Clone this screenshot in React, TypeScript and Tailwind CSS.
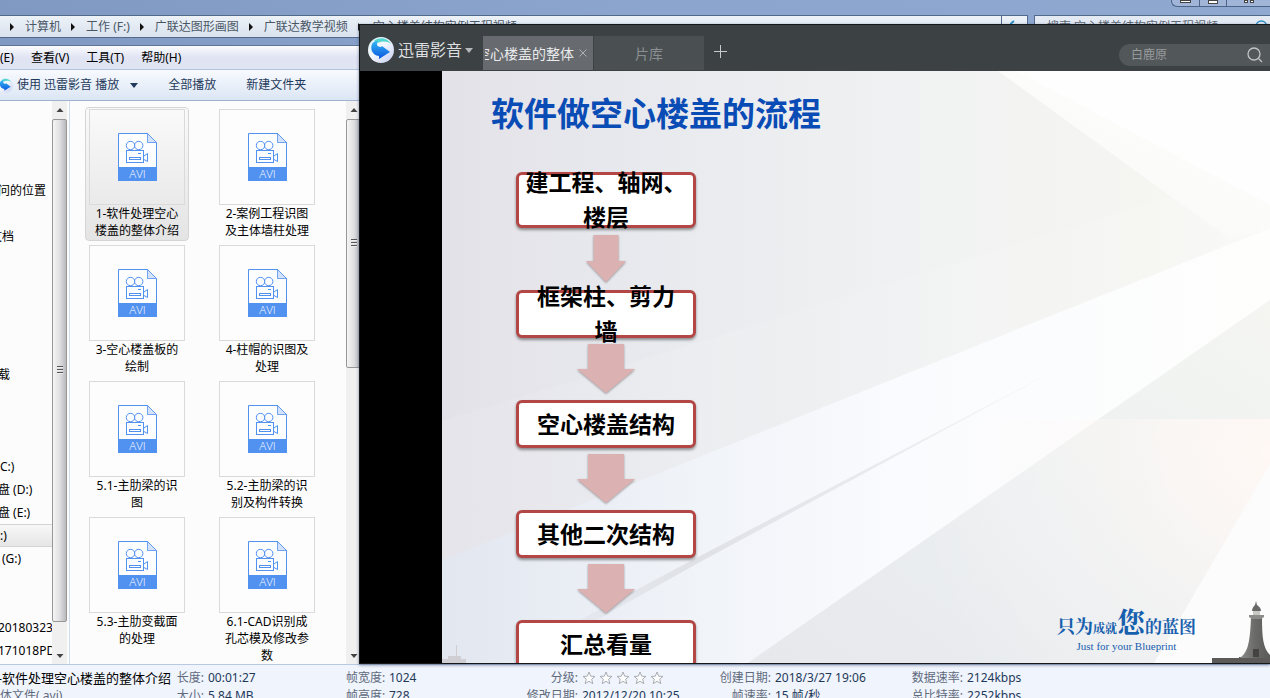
import React from 'react';

import { Search } from 'lucide-react';

const crumbs = ['计算机', '工作 (F:)', '广联达图形画图', '广联达教学视频', '空心楼盖结构实例工程视频'];

const menus = ['(E)', '查看(V)', '工具(T)', '帮助(H)'];

const files = [
  '1-软件处理空心楼盖的整体介绍',
  '2-案例工程识图及主体墙柱处理',
  '3-空心楼盖板的绘制',
  '4-柱帽的识图及处理',
  '5.1-主肋梁的识图',
  '5.2-主肋梁的识别及构件转换',
  '5.3-主肋变截面的处理',
  '6.1-CAD识别成孔芯模及修改参数',
];

// row index in the folder tree -> label; the tree is scrolled to the right
const treeRows: Record<number, { text: string; shift?: string; selected?: boolean }> = {
  3: { text: '问的位置', shift: '-ml-0.5' },
  5: { text: '文档', shift: '-ml-2.5' },
  11: { text: '载', shift: '-ml-0.5' },
  15: { text: 'C:)' },
  16: { text: '盘 (D:)', shift: '-ml-0.5' },
  17: { text: '盘 (E:)', shift: '-ml-0.5' },
  18: { text: ':)', selected: true },
  19: { text: '(G:)', shift: 'ml-0.5' },
  22: { text: '20180323', shift: '-ml-0.5' },
  23: { text: '171018PD', shift: '-ml-0.5' },
};

const steps = [
  { lines: ['建工程、轴网、', '楼层'], height: 'h-[56px]' },
  { lines: ['框架柱、剪力', '墙'], height: 'h-[48px]' },
  { lines: ['空心楼盖结构'], height: 'h-[48px]' },
  { lines: ['其他二次结构'], height: 'h-[48px]' },
  { lines: ['汇总看量'], height: 'h-[48px]' },
];

const PlayerLogo: React.FC<{ className?: string; id: string }> = ({ className, id }) => (
  <svg viewBox="0 0 26 26" className={className} aria-hidden="true">
    <defs>
      <linearGradient id={`${id}-ring`} x1="0" y1="0" x2="1" y2="1">
        <stop offset="0" stopColor="#d8f3f6" />
        <stop offset="0.45" stopColor="#f4f8ff" />
        <stop offset="1" stopColor="#c3cdf0" />
      </linearGradient>
      <linearGradient id={`${id}-arrow`} x1="0" y1="0" x2="0" y2="1">
        <stop offset="0" stopColor="#35b6f2" />
        <stop offset="1" stopColor="#0a55e0" />
      </linearGradient>
    </defs>
    <circle cx="13" cy="13" r="13" fill={`url(#${id}-ring)`} />
    <path d="M6 4C10 0 19 0 23 7C19 4 14 4 10 6Z" fill="#52d6cf" />
    <path d="M4 7C5 5 7 4 10 4C8 7 9 10 13 10L14 9L22 15L11 22L11 19C4 18 2 12 4 7Z" fill={`url(#${id}-arrow)`} />
  </svg>
);

const AviIcon: React.FC = () => (
  <svg viewBox="0 0 39 48" className="h-[48px] w-[39px]" fill="none" stroke="#5191f0" aria-hidden="true">
    <path d="M0.5 0.5H29.5L38.5 9.5V47.5H0.5Z" fill="#fcfdff" />
    <path d="M29.5 0.5V9.5H38.5Z" fill="#d3e3fb" strokeWidth="0.8" />
    <rect x="0" y="34" width="39" height="14" fill="#5191f0" stroke="none" />
    <circle cx="12.5" cy="12.5" r="4.2" />
    <circle cx="20.7" cy="12.5" r="4.2" />
    <rect x="8.5" y="17.5" width="17" height="12" />
    <rect x="11.5" y="24.5" width="11" height="2" />
    <path d="M20 20.5H23M26 23L29.5 20.5V28.5L26 26.5" />
    <text
      x="19.5"
      y="45"
      textAnchor="middle"
      fontSize="11.5"
      fontWeight="300"
      fill="#ffffff"
      stroke="none"
      fontFamily="'Open Sans', 'Noto Sans', sans-serif"
    >
      AVI
    </text>
  </svg>
);

const ScrollBar: React.FC<{ thumb: string }> = ({ thumb }) => (
  <div className="flex w-[15px] shrink-0 flex-col items-center bg-[#f0f0f1]">
    <svg viewBox="0 0 15 18" className="h-[18px] w-[15px] shrink-0" aria-hidden="true">
      <path d="M4.500 11L8 7L11.500 11Z" fill="#444" />
    </svg>
    <div className="min-h-0 w-full flex-1">
      <div
        className={`${thumb} flex w-full flex-col items-center justify-center gap-px rounded-xs border border-[#979797] bg-linear-to-r from-[#f5f5f5] via-[#e0e0e2] to-[#b9babe]`}
      >
        <span className="h-0.5 w-1.5 border-t border-[#555] bg-[#eee]" />
        <span className="h-0.5 w-1.5 border-t border-[#555] bg-[#eee]" />
        <span className="h-0.5 w-1.5 border-t border-[#555] bg-[#eee]" />
      </div>
    </div>
    <svg viewBox="0 0 15 16" className="h-[16px] w-[15px] shrink-0" aria-hidden="true">
      <path d="M4.500 6L8 10L11.500 6Z" fill="#444" />
    </svg>
  </div>
);

const TitleBar: React.FC = () => (
  <div className="flex h-[15px] shrink-0 justify-end">
    <div className="flex h-[7px] w-[99px] overflow-hidden rounded-bl-md border-b border-l border-[#4d6489] bg-[#a0b5d8]">
      <button type="button" aria-label="最小化" className="flex w-[28px] justify-center border-r border-[#4d6489]">
        <span className="h-[3px] w-[11px] border border-[#444] bg-white" />
      </button>
      <button type="button" aria-label="还原" className="flex w-[27px] justify-center border-r border-[#4d6489]">
        <span className="h-[4px] w-[10px] border border-[#444] bg-white" />
      </button>
      <button type="button" aria-label="关闭" className="flex flex-1 justify-center gap-0.5">
        <span className="h-[3px] w-[4px] border border-[#444] bg-white" />
        <span className="h-[3px] w-[4px] border border-[#444] bg-white" />
      </button>
    </div>
  </div>
);

const AddressBar: React.FC = () => (
  <div className="flex h-[30px] shrink-0 items-start gap-[6px]">
    <div className="flex h-[23px] flex-1 items-center border border-l-0 border-[#52698c] bg-linear-to-b from-[#edf2f8] to-[#d9e2ee]">
      <nav className="flex flex-1 items-center">
        {crumbs.map((crumb) => (
          <a key={crumb} href="#" className="flex items-center whitespace-pre text-[#4a5866]">
            <svg viewBox="0 0 25 10" className="h-[10px] w-[25px]" aria-hidden="true">
              <path d="M10 1L14 5L10 9Z" fill="#111" />
            </svg>
            {crumb}
          </a>
        ))}
      </nav>
      <button type="button" aria-label="刷新" className="h-full w-[26px] border-l border-[#52698c]">
        <svg viewBox="0 0 24 20" className="h-[20px] w-[24px]" fill="none" stroke="#2b8fc4" strokeWidth="2" aria-hidden="true">
          <path d="M12 4C7 7 7 12 11 15" />
        </svg>
      </button>
    </div>
    <div className="flex h-[23px] w-[236px] items-center border border-r-0 border-[#52698c] bg-[#e3eaf3] pl-3">
      <input
        type="text"
        aria-label="搜索"
        placeholder="搜索 空心楼盖结构实例工程视频"
        className="min-w-0 flex-1 outline-none placeholder:text-[#5d6874]"
      />
      <Search className="size-4 text-[#2b8fc4]" />
    </div>
  </div>
);

const FolderTree: React.FC = () => (
  <ul className="w-[52px] shrink-0 overflow-hidden pt-[9px]">
    {Array.from({ length: 24 }, (_, i) => treeRows[i]).map((row, i) => (
      <li
        key={i}
        className={`flex h-[23px] items-center whitespace-pre ${row?.selected ? 'border-y border-[#d4d4d4] bg-linear-to-b from-[#f7f7f7] to-[#e6e6e6]' : ''}`}
      >
        {row && (
          <button type="button" className={row.shift}>
            {row.text}
          </button>
        )}
      </li>
    ))}
  </ul>
);

const FileGrid: React.FC = () => (
  <div className="grid flex-1 auto-rows-[134px] grid-cols-[104px_104px] content-start gap-x-[26px] gap-y-0.5 overflow-hidden pt-1.5 pl-[15px]">
    {files.map((file, i) => (
      <button
        key={file}
        type="button"
        className={`flex flex-col items-center rounded-sm border pt-px ${i === 0 ? 'border-[#d5d5d5] bg-linear-to-b from-[#fafafa] to-[#e4e4e4]' : 'border-transparent'}`}
      >
        <span
          className={`flex size-[96px] shrink-0 items-center justify-center border border-[#dadada] ${i === 0 ? '' : 'bg-[#fdfdfd]'}`}
        >
          <AviIcon />
        </span>
        <span className="w-[86px] text-center leading-[17px] break-all">{file}</span>
      </button>
    ))}
  </div>
);

const Label: React.FC<{ children: string }> = ({ children }) => (
  <dt className="text-right text-[#5f6b7c]">{children}</dt>
);

const DetailsPane: React.FC = () => (
  <dl className="grid h-[34px] shrink-0 auto-rows-[18px] grid-cols-[171px_29px_134px_39px_133px_52px_133px_52px_132px_52px_1fr] gap-x-1 overflow-hidden border-t border-[#b9c9df] bg-[#f0f4fc] pt-1 leading-[18px] whitespace-pre text-[#1e395b]">
    <dd className="flex justify-end overflow-hidden text-[13px] text-black">-软件处理空心楼盖的整体介绍</dd>
    <Label>长度:</Label>
    <dd>00:01:27</dd>
    <Label>帧宽度:</Label>
    <dd>1024</dd>
    <Label>分级:</Label>
    <dd className="flex items-center gap-[3px]">
      {[1, 2, 3, 4, 5].map((n) => (
        <svg key={n} viewBox="0 0 14 14" className="size-[14px]" aria-hidden="true">
          <path
            d="M7 1L8.700 5.200L13 5.400L9.700 8.200L10.800 12.700L7 10.300L3.200 12.700L4.300 8.200L1 5.400L5.300 5.200Z"
            fill="#fdfdfd"
            stroke="#a9adb3"
          />
        </svg>
      ))}
    </dd>
    <Label>创建日期:</Label>
    <dd>2018/3/27 19:06</dd>
    <Label>数据速率:</Label>
    <dd>2124kbps</dd>

    <dd className="text-[#5f6b7c]">体文件(.avi)</dd>
    <Label>大小:</Label>
    <dd>5.84 MB</dd>
    <Label>帧高度:</Label>
    <dd>728</dd>
    <Label>修改日期:</Label>
    <dd>2012/12/20 10:25</dd>
    <Label>帧速率:</Label>
    <dd>15 帧/秒</dd>
    <Label>总比特率:</Label>
    <dd>2252kbps</dd>
  </dl>
);

const PlayerHeader: React.FC = () => (
  <header className="flex h-[46px] shrink-0 items-end bg-[#3c4144]">
    <button type="button" className="flex h-full items-center pt-1 pl-2 text-[16px] text-[#dcdedf]">
      <PlayerLogo id="player" className="mr-1 size-[26px]" />
      迅雷影音
      <svg viewBox="0 0 8 5" className="ml-[3px] h-[5px] w-[8px]" aria-hidden="true">
        <path d="M0 0H8L4 5Z" fill="#b5b8ba" />
      </svg>
    </button>
    <div className="mb-px ml-[10px] flex h-[34px] gap-px text-[14px]">
      <div className="flex w-[110px] items-center justify-between bg-[#676a6f] pr-1.5 pl-0.5 text-[#e9eaeb]">
        <button type="button" className="flex w-[89px] justify-end overflow-hidden whitespace-nowrap">
          空心楼盖的整体
        </button>
        <button type="button" aria-label="关闭标签">
          <svg viewBox="0 0 8 8" className="size-2" stroke="#aeb1b4" aria-hidden="true">
            <path d="M0.500 0.500L7.500 7.500M7.500 0.500L0.500 7.500" />
          </svg>
        </button>
      </div>
      <button type="button" className="w-[110px] bg-[#4a4f52] text-[#8b8f91]">
        片库
      </button>
    </div>
    <button type="button" aria-label="新建标签" className="ml-[10px] flex h-[40px] items-center">
      <svg viewBox="0 0 13 13" className="size-[13px]" stroke="#c9cbcc" aria-hidden="true">
        <path d="M6.500 0V13M0 6.500H13" />
      </svg>
    </button>
    <div className="mb-[5px] ml-auto flex h-[22px] w-[151px] items-center rounded-l-full bg-[#525759] pl-3">
      <input
        type="text"
        aria-label="搜索影片"
        placeholder="白鹿原"
        className="min-w-0 flex-1 outline-none placeholder:text-[#999c9e]"
      />
      <svg viewBox="0 0 16 16" className="mr-[7px] size-4" fill="none" stroke="#c2c4c5" strokeWidth="1.3" aria-hidden="true">
        <circle cx="7" cy="7" r="6" />
        <path d="M11.500 11.500L15 15" />
      </svg>
    </div>
  </header>
);

const SlideBackground: React.FC = () => (
  <svg viewBox="0 0 828 592" preserveAspectRatio="none" className="absolute inset-0 size-full" aria-hidden="true">
    <defs>
      <linearGradient id="base" x1="0" y1="0" x2="1" y2="0">
        <stop offset="0" stopColor="#e3e2e8" />
        <stop offset="0.3" stopColor="#e9ebef" />
        <stop offset="0.6" stopColor="#f1f2f2" />
        <stop offset="0.85" stopColor="#f5f6f2" />
        <stop offset="1" stopColor="#fafbf7" />
      </linearGradient>
      <linearGradient id="corner" x1="0" y1="1" x2="0.6" y2="0.2">
        <stop offset="0" stopColor="#f7f8f5" />
        <stop offset="1" stopColor="#fdfdfc" />
      </linearGradient>
      <linearGradient id="beam" x1="0" y1="0" x2="1" y2="0">
        <stop offset="0" stopColor="#e2e7f0" />
        <stop offset="0.3" stopColor="#f0f3f8" />
        <stop offset="0.55" stopColor="#fafbfe" />
        <stop offset="1" stopColor="#fefefd" />
      </linearGradient>
      <linearGradient id="low" x1="0" y1="1" x2="1" y2="0">
        <stop offset="0" stopColor="#e6e8ec" />
        <stop offset="0.5" stopColor="#eceff1" />
        <stop offset="1" stopColor="#f5f6f2" />
      </linearGradient>
      <radialGradient id="glow" gradientUnits="userSpaceOnUse" cx="828" cy="380" r="360">
        <stop offset="0" stopColor="#fff8f5" />
        <stop offset="0.45" stopColor="#fff9f6" stopOpacity="0.4" />
        <stop offset="1" stopColor="#fffaf8" stopOpacity="0" />
      </radialGradient>
      <linearGradient id="streak" x1="0" y1="0" x2="1" y2="0">
        <stop offset="0" stopColor="#dfe1e7" stopOpacity="0.3" />
        <stop offset="0.3" stopColor="#dfe1e7" />
        <stop offset="1" stopColor="#f2f4f5" />
      </linearGradient>
    </defs>
    <rect width="828" height="592" fill="url(#base)" />
    <path d="M0 350L828 95V157L0 489Z" fill="#ffffff" opacity="0.1" />
    <path d="M556 0H828V157L789 169Z" fill="url(#corner)" />
    <path d="M574 0H828V134Z" fill="#fefefe" />
    <path d="M0 489L828 157V229L306 592H0Z" fill="url(#beam)" />
    <path d="M306 592L828 229V592Z" fill="url(#low)" />
    <path d="M100 569L258 485L610 301L258 491L110 574Z" fill="url(#streak)" />
    <rect x="458" y="348" width="370" height="244" fill="url(#glow)" />
    <path d="M828 393L712 592H828Z" fill="#fcfcfc" />
    {/* harbour silhouette */}
    <path d="M0 592V588H6V585H14V574H15V585H19V588H24V592Z" fill="#cfcfd3" />
  </svg>
);

const Lighthouse: React.FC = () => (
  <svg viewBox="0 0 58 62" className="absolute right-0 bottom-0 h-[62px] w-[58px]" aria-hidden="true">
    <defs>
      <linearGradient id="tower" x1="0" y1="0" x2="1" y2="0">
        <stop offset="0" stopColor="#8b8b89" />
        <stop offset="0.5" stopColor="#6a6a69" />
        <stop offset="1" stopColor="#5a5a59" />
      </linearGradient>
    </defs>
    <path d="M0 57H27V56H58V62H0Z" fill="#5b5a59" />
    <path d="M39 16H50C50 36 51 47 58 54V57H28C36 51 38 42 39 16Z" fill="url(#tower)" />
    <path d="M44 0L45 4C48 6 49 8 49 10H40C40 8 41 6 43 4Z" fill="#686868" />
    <rect x="41" y="10" width="7" height="5" fill="#c9c8c4" />
    <path d="M37 14H52V16L49 18H40L37 16Z" fill="#8c8c8a" />
    <rect x="41" y="48" width="6" height="8" fill="#444342" />
  </svg>
);

const Arrow: React.FC<{ narrow: boolean }> = ({ narrow }) => (
  <svg
    viewBox="0 0 58 50"
    preserveAspectRatio="none"
    className={`${narrow ? 'w-[40px]' : 'w-[58px]'} h-[50px] shrink-0 drop-shadow-[0_1px_1px_rgba(0,0,0,0.35)]`}
    aria-hidden="true"
  >
    <path d={narrow ? 'M11 1H47V27H58L29 48L0 27H11Z' : 'M11 0H47V25H58L29 49L0 25H11Z'} fill="#dcb1b2" />
  </svg>
);

const Slide: React.FC = () => (
  <div className="relative flex-1 overflow-hidden">
    <SlideBackground />
    <Lighthouse />
    <div className="relative flex flex-col items-start pt-5 pl-[49px]">
      <h1 className="text-[33px] leading-[46px] font-bold text-[#0a4cb5]">软件做空心楼盖的流程</h1>
      <div className="mt-[35px] ml-[25px] flex w-[180px] flex-col items-center gap-1.5">
        {steps.map((step, i) => (
          <React.Fragment key={step.lines[0]}>
            {i > 0 && <Arrow narrow={i === 1} />}
            <div
              className={`${step.height} flex w-full shrink-0 flex-col items-center justify-center rounded-md border-[3px] border-[#b24746] bg-white text-[23px] leading-[35px] font-bold whitespace-nowrap text-black shadow-[0_2px_3px_rgba(0,0,0,0.4)]`}
            >
              {step.lines.map((line) => (
                <span key={line}>{line}</span>
              ))}
            </div>
          </React.Fragment>
        ))}
      </div>
    </div>
    <div className="absolute right-[74px] bottom-[10px] flex flex-col items-center font-['Liberation_Serif','Noto_Serif_CJK_SC','Noto_Sans_CJK_SC',serif] text-[#1760ae]">
      <p className="flex items-baseline text-[18px] leading-[20px] font-bold">
        只为<span className="text-[12px]">成就</span>
        <span className="text-[28px]">您</span>
        <span className="text-[17px]">的蓝图</span>
      </p>
      <p className="text-[11px] leading-[14px] font-medium">Just for your Blueprint</p>
    </div>
  </div>
);

const App: React.FC = () => (
  <div className="relative flex h-screen flex-col overflow-hidden bg-linear-to-r from-[#7f99c2] via-[#8ba5cf] to-[#8fa8d0] font-['Noto_Sans','Noto_Sans_CJK_SC',sans-serif] text-[12px] text-black">
    <TitleBar />
    <AddressBar />

    <div className="flex h-[24px] shrink-0 items-center gap-[17px] border-t border-[#5f7597] bg-linear-to-b from-[#fbfcfe] via-[#e0e4f3] to-[#dfe4f3]">
      {menus.map((menu) => (
        <button key={menu} type="button">
          {menu}
        </button>
      ))}
    </div>

    <div className="flex h-[32px] shrink-0 items-center border-y border-t-[#b5c3dc] border-b-[#9fb3d1] bg-linear-to-b from-[#f8fafe] to-[#dbe6f4] text-[#1e395b]">
      <button type="button" className="-ml-0.5 flex items-center">
        <PlayerLogo id="tool" className="mr-1 size-[15px]" />
        使用 迅雷影音 播放
        <svg viewBox="0 0 8 5" className="ml-[11px] h-[5px] w-[8px]" aria-hidden="true">
          <path d="M0 0H8L4 5Z" fill="#1e395b" />
        </svg>
      </button>
      <button type="button" className="ml-[30px]">
        全部播放
      </button>
      <button type="button" className="ml-[30px]">
        新建文件夹
      </button>
    </div>

    <div className="flex min-h-0 flex-1 bg-[#fcfcfc]">
      <FolderTree />
      <ScrollBar thumb="h-[95%]" />
      <main className="ml-0.5 flex w-[292px] border-l border-[#d0dcef]">
        <FileGrid />
        <ScrollBar thumb="h-[47%]" />
      </main>
    </div>

    <DetailsPane />

    {/* player window on top of the explorer */}
    <section className="absolute top-[24px] right-0 bottom-[34px] left-[359px] flex flex-col border border-r-0 border-[#15181a] bg-black shadow-[0_1px_3px_rgba(40,60,100,0.6)]">
      <PlayerHeader />
      <div className="flex min-h-0 flex-1">
        <div className="w-[82px] shrink-0 bg-black" />
        <Slide />
      </div>
    </section>
  </div>
);

export default App;
